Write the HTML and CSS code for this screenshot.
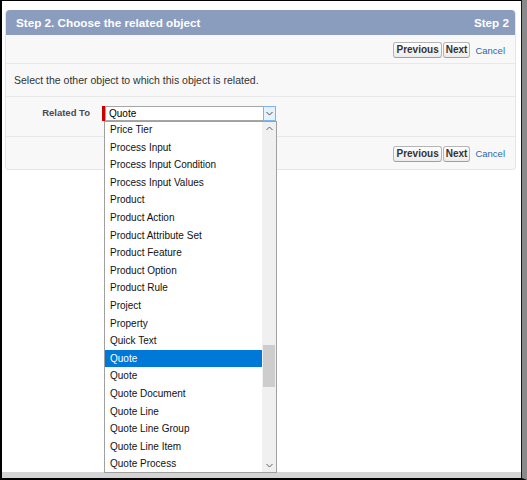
FILE: index.html
```html
<!DOCTYPE html>
<html>
<head>
<meta charset="utf-8">
<link rel="stylesheet" href="styles.css">
</head>
<body>
<div class="screen">
  <div class="frame">
    <div class="content">
      <div class="panel">
        <div class="panel-head">
          <h2 class="title">Step 2. Choose the related object</h2>
          <span class="step">Step 2</span>
        </div>
        <div class="btn-row top">
          <button class="btn">Previous</button>
          <button class="btn">Next</button>
          <a class="cancel">Cancel</a>
        </div>
        <div class="desc">Select the other object to which this object is related.</div>
        <div class="form-row">
          <label class="label">Related To</label>
          <div class="field">
            <span class="req"></span>
            <div class="select">
              <span class="sel-text">Quote</span>
              <span class="sel-arrow">
                <svg width="7" height="5" viewBox="0 0 7 5"><path d="M0.5 1 L3.5 4 L6.5 1" fill="none" stroke="#4d4d4d" stroke-width="1"/></svg>
              </span>
            </div>
            <div class="dropdown">
              <ul class="options">
                <li>Price Tier</li>
                <li>Process Input</li>
                <li>Process Input Condition</li>
                <li>Process Input Values</li>
                <li>Product</li>
                <li>Product Action</li>
                <li>Product Attribute Set</li>
                <li>Product Feature</li>
                <li>Product Option</li>
                <li>Product Rule</li>
                <li>Project</li>
                <li>Property</li>
                <li>Quick Text</li>
                <li class="selected">Quote</li>
                <li>Quote</li>
                <li>Quote Document</li>
                <li>Quote Line</li>
                <li>Quote Line Group</li>
                <li>Quote Line Item</li>
                <li>Quote Process</li>
              </ul>
              <div class="scrollbar">
                <svg class="arr-up" width="7" height="5" viewBox="0 0 7 5"><path d="M0.5 4 L3.5 1 L6.5 4" fill="none" stroke="#606060" stroke-width="1"/></svg>
                <div class="track"><div class="thumb"></div></div>
                <svg class="arr-down" width="7" height="5" viewBox="0 0 7 5"><path d="M0.5 1 L3.5 4 L6.5 1" fill="none" stroke="#606060" stroke-width="1"/></svg>
              </div>
            </div>
          </div>
        </div>
        <div class="btn-row bottom">
          <button class="btn">Previous</button>
          <button class="btn">Next</button>
          <a class="cancel">Cancel</a>
        </div>
      </div>
    </div>
    <div class="bottom-band"></div>
  </div>
</div>
</body>
</html>
```

FILE: styles.css
```css
html, body {
  margin: 0;
  padding: 0;
  background: #ffffff;
}

.screen {
  width: 527px;
  height: 480px;
  box-sizing: border-box;
  border-right: 5px solid #8a8a8a;
  border-bottom: 2px solid #000;
  font-family: "Liberation Sans", Arial, sans-serif;
}

.frame {
  height: 100%;
  box-sizing: border-box;
  border-left: 2px solid #000;
  border-top: 1px solid #000;
  border-right: 1px solid #1a1a1a;
  display: flex;
  flex-direction: column;
}

.content {
  flex: 1;
  padding: 9px 5px 0 3px;
}

.bottom-band {
  height: 6px;
  background: #d4d4d4;
}

.panel {
  background: #f8f8f8;
  border: 1px solid #e6e6e6;
  border-top: none;
  border-radius: 4px;
}

.panel-head {
  height: 25px;
  background: #8b9dbf;
  border-radius: 4px 4px 0 0;
  display: flex;
  align-items: center;
  justify-content: space-between;
  padding: 0 6px 0 10px;
  color: #fff;
}

.title {
  margin: 0;
  font-size: 11.7px;
  font-weight: bold;
}

.step {
  font-size: 11.7px;
  font-weight: bold;
}

.btn-row {
  display: flex;
  justify-content: flex-end;
  align-items: center;
  gap: 1px;
  padding-right: 10px;
}

.btn-row.top {
  height: 29px;
  padding-top: 2px;
  box-sizing: border-box;
  border-bottom: 1px solid #e8e8e8;
}

.btn-row.bottom {
  height: 33px;
  padding-top: 1px;
  box-sizing: border-box;
  border-top: 1px solid #e8e8e8;
}

.btn {
  font-family: "Liberation Sans", Arial, sans-serif;
  font-size: 10px;
  font-weight: bold;
  color: #333;
  height: 16px;
  padding: 0 2px;
  background: linear-gradient(#ffffff, #ececec);
  border: 1px solid #b5b5b5;
  border-bottom-color: #9f9f9f;
  border-radius: 3px;
  line-height: 14px;
}

.cancel {
  font-size: 9.5px;
  color: #2a67a8;
  margin-left: 4px;
}

.desc {
  height: 32px;
  line-height: 32px;
  padding-left: 8px;
  font-size: 10.5px;
  color: #333;
  border-bottom: 1px solid #e8e8e8;
}

.form-row {
  height: 39px;
  display: flex;
  align-items: flex-start;
  padding-top: 9px;
  box-sizing: border-box;
}

.label {
  width: 84px;
  text-align: right;
  font-size: 9.5px;
  font-weight: bold;
  color: #4a4a56;
  padding-top: 1px;
}

.field {
  position: relative;
  margin-left: 12px;
  display: flex;
}

.req {
  width: 3px;
  height: 15px;
  background: #c00;
}

.select {
  width: 171px;
  height: 15px;
  box-sizing: border-box;
  border: 1px solid #a6a6a6;
  border-right: none;
  background: #fff;
  display: flex;
  align-items: center;
  justify-content: space-between;
  font-family: "Liberation Sans", Tahoma, sans-serif;
  font-size: 10px;
  color: #000;
}

.sel-text {
  padding-left: 3px;
}

.sel-arrow {
  width: 13px;
  height: 15px;
  box-sizing: border-box;
  border: 1px solid #7eb4ea;
  background: #e5f1fb;
  display: flex;
  align-items: center;
  justify-content: center;
}

.dropdown {
  position: absolute;
  top: 15px;
  left: 2px;
  width: 173px;
  height: 352px;
  box-sizing: border-box;
  border: 1px solid #a0a0a0;
  background: #fff;
  display: flex;
  overflow: hidden;
}

.options {
  list-style: none;
  margin: -1px 0 0 0;
  padding: 0;
  flex: 1;
  font-family: "Liberation Sans", Tahoma, sans-serif;
  font-size: 10px;
  color: #111;
}

.options li {
  height: 17.6px;
  line-height: 17.6px;
  padding-left: 5px;
  white-space: nowrap;
}

.options li.selected {
  background: #0078d7;
  color: #fff;
}

.scrollbar {
  width: 14px;
  background: #f0f0f0;
  display: flex;
  flex-direction: column;
  align-items: center;
}

.arr-up {
  margin-top: 4px;
}

.track {
  flex: 1;
  width: 100%;
  position: relative;
}

.thumb {
  position: absolute;
  left: 1px;
  right: 1px;
  top: 214px;
  height: 42px;
  background: #cdcdcd;
}

.arr-down {
  margin-bottom: 4px;
}
```
